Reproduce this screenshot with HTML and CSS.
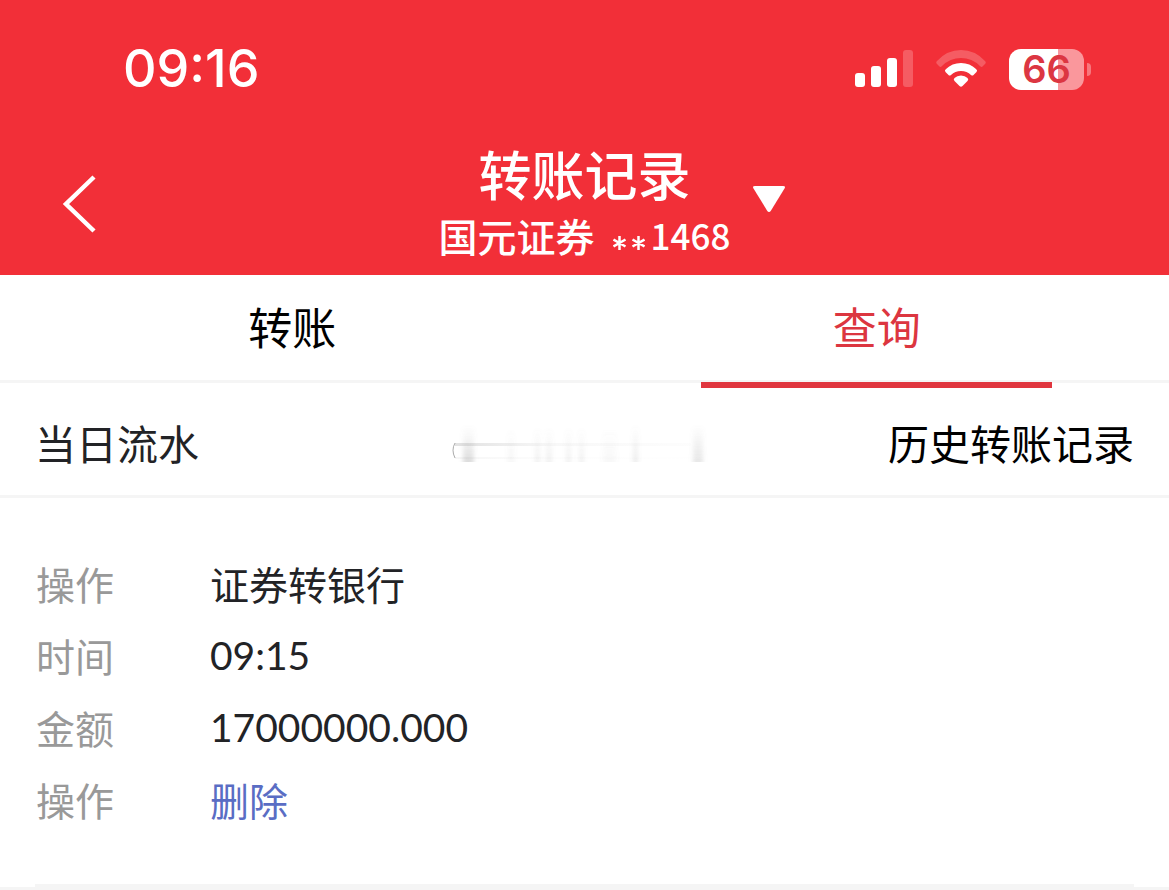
FILE: index.html
```html
<!DOCTYPE html>
<html lang="zh-CN">
<head>
<meta charset="utf-8">
<meta name="viewport" content="width=device-width, initial-scale=1">
<title>转账记录</title>
<link rel="stylesheet" href="styles.css">
</head>
<body>
<header class="header">
  <div class="status">
    <time class="clock">09:16</time>
    <div class="indicators">
      <svg width="58" height="38" viewBox="0 0 58 38" fill="#fff" aria-hidden="true">
        <rect x="0" y="23" width="10" height="14" rx="3"/>
        <rect x="16" y="16" width="10" height="21" rx="3"/>
        <rect x="32" y="8" width="10" height="29" rx="3"/>
        <rect x="48" y="0" width="10" height="37" rx="3" opacity=".22"/>
      </svg>
      <svg width="50" height="38" viewBox="0 0 50 38" fill="#fff" aria-hidden="true">
        <path opacity=".22" d="M1 11Q11 0 25 0T49 11Q50.500 12.500 49 14L46.500 16.500Q45.500 17.500 44 16Q36 8 25 8T6 16Q4.500 17.500 3.500 16.500L1 14Q-.5 12.500 1 11Z"/>
        <path d="M10 19Q16 13 25 13T40 19Q42 20.500 40.500 22L37.500 25Q36.500 26 35 25Q31 21 25 21T15 25Q13.500 26 12.500 25L9.500 22Q8 20.500 10 19Z"/>
        <path d="M18.500 28Q21 25.500 25 25.500T31.500 28Q33 29.500 31.500 31L26.500 36Q25 37.500 23.500 36L18.500 31Q17 29.500 18.500 28Z"/>
      </svg>
      <div class="battery"><span class="battery-body">66</span><span class="battery-tip"></span></div>
    </div>
  </div>
  <div class="nav">
    <button class="back" type="button" aria-label="返回">
      <svg width="34" height="58" viewBox="0 0 34 58" fill="none" stroke="#fff" stroke-width="4.500" aria-hidden="true"><path d="M32 2L4 29L32 56"/></svg>
    </button>
    <div class="heading">
      <h1 class="title">转账记录</h1>
      <p class="account"><span>国元证券</span><span class="mask"><svg width="32" height="14" viewBox="0 0 32 14" stroke="#fff" stroke-width="2.500" role="img" aria-label="**"><path d="M6.500 0V14M.5 3.500L12.500 10.500M12.500 3.500L.5 10.500M25.500 0V14M19.500 3.500L31.500 10.500M31.500 3.500L19.500 10.500"/></svg></span><span class="number">1468</span></p>
    </div>
    <button class="switch" type="button" aria-label="切换账户">
      <svg width="34" height="28" viewBox="0 0 34 28" fill="#fff" aria-hidden="true"><path d="M3 1H31Q34 1 32.500 3.500L19 25.500Q17 28.500 15 25.500L1.500 3.500Q0 1 3 1Z"/></svg>
    </button>
  </div>
</header>
<nav class="tabs">
  <a class="tab" href="#transfer">转账</a>
  <a class="tab active" href="#query" aria-current="page">查询</a>
</nav>
<main>
  <div class="filters">
    <h2 class="today">当日流水</h2>
    <svg class="smudge" width="260" height="42" viewBox="0 0 260 42" aria-hidden="true">
      <defs>
        <linearGradient id="fall" x1="0" y1="0" x2="0" y2="1"><stop offset="0" stop-color="#888" stop-opacity="0"/><stop offset="1" stop-color="#888" stop-opacity=".2"/></linearGradient>
        <linearGradient id="trail"><stop offset="0" stop-color="#888" stop-opacity=".25"/><stop offset=".4" stop-color="#888" stop-opacity=".06"/><stop offset="1" stop-color="#888" stop-opacity=".02"/></linearGradient>
        <filter id="soft" x="-10%" width="120%"><feGaussianBlur stdDeviation="2 0"/></filter>
      </defs>
      <g fill="url(#fall)" filter="url(#soft)">
        <rect x="12" y="0" width="11" height="37"/><rect x="12" y="14" width="10" height="23" opacity=".6"/>
        <rect x="57" y="4" width="6" height="33" opacity=".4"/><rect x="84" y="2" width="5" height="35" opacity=".6"/><rect x="95" y="2" width="6" height="35" opacity=".6"/>
        <rect x="115" y="2" width="5" height="35" opacity=".6"/><rect x="128" y="2" width="5" height="35" opacity=".6"/><rect x="152" y="4" width="13" height="33" opacity=".3"/>
        <rect x="182" y="0" width="5" height="37" opacity=".8"/><rect x="242" y="0" width="10" height="37"/>
      </g>
      <rect x="4" y="18" width="236" height="3" fill="url(#trail)"/><rect x="4" y="32" width="236" height="2" fill="url(#trail)" opacity=".3"/>
      <path d="M4 18Q0 25 4 33" fill="none" stroke="#888" stroke-opacity=".7"/>
    </svg>
    <a class="history" href="#history">历史转账记录</a>
  </div>
  <dl class="record">
    <div class="row"><dt>操作</dt><dd>证券转银行</dd></div>
    <div class="row"><dt>时间</dt><dd class="figure">09:15</dd></div>
    <div class="row"><dt>金额</dt><dd class="figure">17000000.000</dd></div>
    <div class="row"><dt>操作</dt><dd><button class="delete" type="button">删除</button></dd></div>
  </dl>
  <div class="divider"></div>
</main>
</body>
</html>
```
FILE: styles.css
```css
* { box-sizing: border-box; }
body {
  margin: 0;
  background: #fff;
  color: #222326;
  font-family: "Noto Sans CJK SC", sans-serif;
  font-size: 39px;
}
h1, h2, p, dl, dd { margin: 0; font-weight: 400; }
a { color: inherit; text-decoration: none; }
button { padding: 0; border: 0; background: none; color: inherit; font: inherit; }
svg { display: block; }

.header { background: #f22f38; color: #fff; }
.status {
  display: flex;
  justify-content: space-between;
  align-items: center;
  height: 138px;
  padding: 0 78px 0 123px;
}
.clock { font: 500 52px/62px Inter, sans-serif; }
.indicators { display: flex; align-items: center; gap: 23px; }
.battery { display: flex; align-items: center; gap: 3px; }
.battery-body {
  width: 75px;
  border-radius: 12px;
  background: linear-gradient(90deg, #fff 66%, #fa979c 66%);
  color: #dc3642;
  font: 600 38px/41px Inter, sans-serif;
  text-align: center;
}
.battery-tip { width: 4px; height: 13px; border-radius: 0 6px 6px 0; background: #f7777d; }

.nav {
  display: grid;
  grid-template-columns: 1fr auto 1fr;
  height: 137px;
}
.back { justify-self: start; align-self: start; margin: 37px 0 0 62px; }
.heading { text-align: center; }
.title { padding-top: 5px; font-size: 53px; font-weight: 500; line-height: 60px; }
.account { display: flex; align-items: center; font-weight: 500; line-height: 64px; }
.mask { margin: 16px 6px 0 18px; }
.number { font-size: 35px; }
.switch { justify-self: start; align-self: start; margin: 47px 0 0 22px; }

.tabs {
  display: grid;
  grid-template-columns: 1fr 1fr;
  height: 108px;
  border-bottom: 3px solid #f5f5f5;
  color: #000;
  font-size: 44px;
  line-height: 102px;
  text-align: center;
}
.tab { position: relative; }
.active { color: #dc3640; }
.active::after {
  content: "";
  position: absolute;
  right: 20%;
  bottom: -8px;
  left: 20%;
  height: 6px;
  background: #e0363f;
}

.filters {
  display: flex;
  justify-content: space-between;
  align-items: center;
  height: 115px;
  padding: 6px 35px 0;
  border-bottom: 3px solid #f5f5f5;
  font-size: 41px;
}
.today { font-size: 41px; }
.smudge { margin: 8px 0 0 74px; }
.history { color: #000; }

.record { padding: 49px 36px; }
.row { display: grid; grid-template-columns: 174px 1fr; line-height: 72px; }
dt { color: #999; }
.figure { font-family: Lato, sans-serif; }
.delete { color: #5a6dc4; }
.divider { border-bottom: 3px solid #f5f5f5; }
.divider::before {
  content: "";
  display: block;
  height: 3px;
  margin: 0 35px;
  background: #f5f5f5;
}
```
